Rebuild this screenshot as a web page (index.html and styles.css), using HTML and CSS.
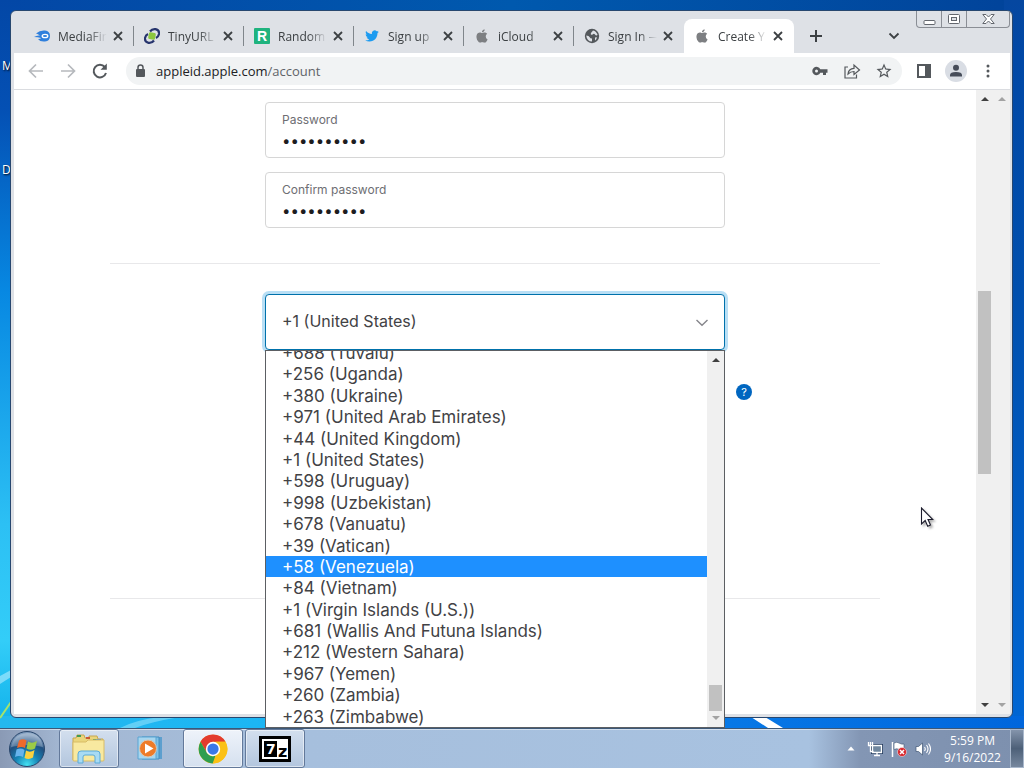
FILE: index.html
```html
<!DOCTYPE html>
<html lang="en">
<head>
    <meta charset="utf-8">
    <title>Create Your Apple ID</title>
    <link rel="stylesheet" href="styles.css">
</head>
<body>
    <svg class="defs" aria-hidden="true">
        <symbol id="apple" viewBox="0 0 24 24">
            <path fill="#7d7f82" d="M12.152 6.896c-.948 0-2.415-1.078-3.96-1.04-2.04.027-3.91 1.183-4.961 3.014-2.117 3.675-.546 9.103 1.519 12.09 1.013 1.454 2.208 3.09 3.792 3.039 1.52-.065 2.09-.987 3.935-.987 1.831 0 2.35.987 3.96.948 1.637-.026 2.676-1.48 3.676-2.948 1.156-1.688 1.636-3.325 1.662-3.415-.039-.013-3.182-1.221-3.22-4.857-.026-3.04 2.48-4.494 2.597-4.559-1.429-2.09-3.623-2.324-4.39-2.376-2-.156-3.675 1.09-4.61 1.09zM15.53 3.83c.843-1.012 1.4-2.427 1.245-3.83-1.207.052-2.662.805-3.532 1.818-.78.896-1.454 2.338-1.273 3.714 1.338.104 2.715-.688 3.559-1.701"/>
        </symbol>
        <symbol id="close" viewBox="0 0 18 18">
            <path d="M5 5l8 8M13 5l-8 8" stroke="#3c4043" stroke-width="1.8" fill="none"/>
        </symbol>
    </svg>

    <main class="desktop">
        <svg class="streaks" viewBox="0 0 1024 728" preserveAspectRatio="none" aria-hidden="true">
            <path d="M0 676L11 670V677L0 684z" fill="#b5ecff" opacity=".6"/>
            <path d="M0 718L11 702" stroke="#a5e36c" stroke-width="2"/>
            <path d="M120 728Q135 720 160 717L180 717Q150 722 135 728z" fill="#8fe0fa" opacity=".6"/>
            <path d="M751 717H765L783 728H768z" fill="#fff"/>
        </svg>
        <span class="desktop-label label-m">M</span>
        <span class="desktop-label label-d">D</span>

        <div class="window">
            <div class="tab-strip">
                <div class="tabs">
                    <div class="tab">
                        <svg class="favicon" viewBox="0 0 16 16"><path d="M0 9Q3 7 6 7.500Q3 5.500 2 5.500Q6 2 11 2.500Q16 3 16 8T11 13.500Q6 14 4 11Q7 11 7 10Q4 9 0 9z" fill="#2f7fdc"/><ellipse cx="11" cy="8" rx="2.800" ry="1.700" fill="#2f7fdc" stroke="#fff" stroke-width="1.300"/></svg>
                        <span class="tab-title">MediaFir</span>
                        <button class="tab-close" aria-label="Close tab"><svg><use href="#close"/></svg></button>
                    </div>
                    <div class="tab">
                        <svg class="favicon" viewBox="0 0 16 16"><rect x="4.500" y="4.500" width="7" height="7" rx="1.500" fill="#8cc63f" transform="rotate(10 8 8)"/><path d="M6 3.500Q8 .8 11.500 1.200Q15.500 2 15 6Q14.500 9 12 10M10 12.500Q8 15.200 4.500 14.800Q.5 14 1 10Q1.500 7 4 6" fill="none" stroke="#26346d" stroke-width="2.200"/></svg>
                        <span class="tab-title">TinyURL</span>
                        <button class="tab-close" aria-label="Close tab"><svg><use href="#close"/></svg></button>
                    </div>
                    <div class="tab">
                        <svg class="favicon" viewBox="0 0 16 16"><rect width="16" height="16" rx="1" fill="#1fb37e"/><text x="8" y="13" class="random-letter">R</text></svg>
                        <span class="tab-title">Random</span>
                        <button class="tab-close" aria-label="Close tab"><svg><use href="#close"/></svg></button>
                    </div>
                    <div class="tab">
                        <svg class="favicon" viewBox="-2 -2 28 28"><path fill="#1d9bf0" d="M23.953 4.57a10 10 0 01-2.825.775 4.958 4.958 0 002.163-2.723c-.951.555-2.005.959-3.127 1.184a4.92 4.92 0 00-8.384 4.482C7.69 8.095 4.067 6.13 1.64 3.162a4.822 4.822 0 00-.666 2.475c0 1.71.87 3.213 2.188 4.096a4.904 4.904 0 01-2.228-.616v.06a4.923 4.923 0 003.946 4.827 4.996 4.996 0 01-2.212.085 4.936 4.936 0 004.604 3.417 9.867 9.867 0 01-6.102 2.105c-.39 0-.779-.023-1.17-.067a13.995 13.995 0 007.557 2.209c9.053 0 13.998-7.496 13.998-13.985 0-.21 0-.42-.015-.63A9.935 9.935 0 0024 4.59z"/></svg>
                        <span class="tab-title">Sign up</span>
                        <button class="tab-close" aria-label="Close tab"><svg><use href="#close"/></svg></button>
                    </div>
                    <div class="tab">
                        <svg class="favicon" viewBox="-2 -2 28 28"><use href="#apple" width="24" height="24"/></svg>
                        <span class="tab-title">iCloud</span>
                        <button class="tab-close" aria-label="Close tab"><svg><use href="#close"/></svg></button>
                    </div>
                    <div class="tab">
                        <svg class="favicon" viewBox="0 0 16 16"><circle cx="8" cy="8" r="7.200" fill="#54585c"/><path d="M2.200 7.500Q5 7.500 5.500 9T8 10.500V13.500Q3 13.500 2.200 7.500zM9 2.400Q12.500 3.200 13.600 7Q12 8 11 6.500T8 7Q6 6.500 7 5T9 2.400zM11 9.500L13 9.300Q12.500 11.500 11 12.500z" fill="#dee1e6"/></svg>
                        <span class="tab-title">Sign In &mdash;</span>
                        <button class="tab-close" aria-label="Close tab"><svg><use href="#close"/></svg></button>
                    </div>
                    <div class="tab tab-active">
                        <svg class="favicon" viewBox="-2 -2 28 28"><use href="#apple" width="24" height="24"/></svg>
                        <span class="tab-title">Create Y</span>
                        <button class="tab-close" aria-label="Close tab"><svg><use href="#close"/></svg></button>
                    </div>
                </div>
                <button class="strip-button new-tab" aria-label="New tab">
                    <svg width="14" height="14" viewBox="0 0 14 14"><path d="M7 1v12M1 7h12" stroke="#3c4043" stroke-width="2"/></svg>
                </button>
                <button class="strip-button tab-search" aria-label="Search tabs">
                    <svg width="12" height="8" viewBox="0 0 12 8"><path d="M1.500 1.500L6 6l4.500-4.500" fill="none" stroke="#3c4043" stroke-width="1.800"/></svg>
                </button>
                <div class="window-controls">
                    <button class="control" aria-label="Minimize">
                        <svg width="13" height="14" viewBox="0 0 13 14"><rect x="1" y="8.500" width="11" height="4" rx="1" fill="#fff" stroke="#63676e"/></svg>
                    </button>
                    <button class="control" aria-label="Maximize">
                        <svg width="13" height="12" viewBox="0 0 13 12"><rect x=".5" y="1.500" width="11" height="9" rx="1" fill="#fff" stroke="#63676e"/><rect x="3.500" y="4.500" width="5" height="3" fill="#dee1e6" stroke="#63676e"/></svg>
                    </button>
                    <button class="control control-close" aria-label="Close">
                        <svg width="13" height="12" viewBox="0 0 13 12"><path d="M.8 1.500H4L6.500 4 9 1.500h3.200L8.500 6l3.700 4.500H9L6.500 8 4 10.500H.8L4.500 6z" fill="#fff" stroke="#63676e"/></svg>
                    </button>
                </div>
            </div>

            <div class="toolbar">
                <button class="tool" aria-label="Back"><svg viewBox="0 0 18 18"><path d="M16 9H3M9 2.500L2.500 9 9 15.500" fill="none" stroke="#b6b9bd" stroke-width="1.700"/></svg></button>
                <button class="tool" aria-label="Forward"><svg viewBox="0 0 18 18"><path d="M2 9h13M9 2.500L15.500 9 9 15.500" fill="none" stroke="#b6b9bd" stroke-width="1.700"/></svg></button>
                <button class="tool" aria-label="Reload"><svg viewBox="0 0 18 18"><path d="M15 11A6.300 6.300 0 1 1 13.800 5" fill="none" stroke="#54585c" stroke-width="2"/><path d="M15.800 1.500v6.300H9.500z" fill="#54585c"/></svg></button>
                <div class="omnibox">
                    <svg class="lock" viewBox="0 0 16 16"><rect x="4" y="6" width="9" height="8" rx="1" fill="#54585c"/><path d="M6 7V4.500a2.500 2.500 0 0 1 5 0V7" fill="none" stroke="#54585c" stroke-width="1.500"/></svg>
                    <span class="url">appleid.apple.com<span class="url-path">/account</span></span>
                    <button class="tool" aria-label="Passwords"><svg viewBox="0 0 18 18"><path fill="#54585c" fill-rule="evenodd" d="M9.300 7.300A4.200 4.200 0 1 0 9.300 10.700H12V13H15V10.700H16.500V7.300zM5.500 7.500a1.500 1.500 0 1 1 0 3 1.500 1.500 0 0 1 0-3z"/></svg></button>
                    <button class="tool" aria-label="Share"><svg viewBox="0 0 18 18"><path d="M5 5H2v11h11.500v-3.500M5 12Q5.500 6.500 11 6.300V3l5.500 5-5.500 4.500V9.500Q7.500 9.500 5 12z" fill="none" stroke="#54585c" stroke-width="1.200"/></svg></button>
                    <button class="tool" aria-label="Bookmark"><svg viewBox="0 0 24 24"><path fill="#54585c" d="M22 9.240l-7.190-.62L12 2 9.190 8.630 2 9.240l5.460 4.730L5.820 21 12 17.270 18.180 21l-1.630-7.030L22 9.240zM12 15.400l-3.760 2.270 1-4.280-3.320-2.880 4.380-.38L12 6.100l1.710 4.040 4.380.38-3.320 2.880 1 4.280L12 15.400z"/></svg></button>
                </div>
                <button class="tool" aria-label="Side panel"><svg viewBox="0 0 18 18"><path d="M2 2h14v14H2zM4 4v10h6V4z" fill="#54585c" fill-rule="evenodd"/></svg></button>
                <button class="tool" aria-label="Profile"><svg class="avatar" viewBox="0 0 22 22"><circle cx="11" cy="11" r="11" fill="#d9dde4"/><circle cx="11" cy="7.700" r="3" fill="#464c59"/><path d="M5 16.500V15q0-3 6-3t6 3v1.500z" fill="#464c59"/></svg></button>
                <button class="tool" aria-label="Menu"><svg viewBox="0 0 18 18"><circle cx="9" cy="4" r="1.500" fill="#54585c"/><circle cx="9" cy="9" r="1.500" fill="#54585c"/><circle cx="9" cy="14" r="1.500" fill="#54585c"/></svg></button>
            </div>

            <div class="page">
                <form class="account-form">
                    <div class="section">
                        <div class="field">
                            <label for="password">Password</label>
                            <input type="password" id="password" value="applepass1">
                        </div>
                        <div class="field">
                            <label for="confirm">Confirm password</label>
                            <input type="password" id="confirm" value="applepass1">
                        </div>
                    </div>
                    <div class="section section-phone">
                        <div class="country">
                            <select class="country-select" aria-label="Country code">
                                <option>+1 (United States)</option>
                            </select>
                            <svg class="country-arrow" width="12" height="8" viewBox="0 0 12 8"><path d="M.5 1L6 6.300 11.500 1" fill="none" stroke="#86868b" stroke-width="1.400"/></svg>
                            <div class="menu">
                                <ul class="menu-list">
                                    <li>+688 (Tuvalu)</li>
                                    <li>+256 (Uganda)</li>
                                    <li>+380 (Ukraine)</li>
                                    <li>+971 (United Arab Emirates)</li>
                                    <li>+44 (United Kingdom)</li>
                                    <li>+1 (United States)</li>
                                    <li>+598 (Uruguay)</li>
                                    <li>+998 (Uzbekistan)</li>
                                    <li>+678 (Vanuatu)</li>
                                    <li>+39 (Vatican)</li>
                                    <li class="highlighted">+58 (Venezuela)</li>
                                    <li>+84 (Vietnam)</li>
                                    <li>+1 (Virgin Islands (U.S.))</li>
                                    <li>+681 (Wallis And Futuna Islands)</li>
                                    <li>+212 (Western Sahara)</li>
                                    <li>+967 (Yemen)</li>
                                    <li>+260 (Zambia)</li>
                                    <li>+263 (Zimbabwe)</li>
                                </ul>
                                <div class="scrollbar">
                                    <span class="arrow-up"></span>
                                    <span class="thumb menu-thumb"></span>
                                    <span class="arrow-down faded"></span>
                                </div>
                            </div>
                        </div>
                        <button type="button" class="help">?</button>
                    </div>
                </form>
                <div class="scrollbar">
                    <span class="arrow-up"></span>
                    <span class="thumb page-thumb"></span>
                    <span class="arrow-down"></span>
                </div>
                <div class="scrollbar">
                    <span class="arrow-up faded"></span>
                    <span class="arrow-down faded"></span>
                </div>
            </div>
        </div>

        <svg class="cursor" width="14" height="22" viewBox="0 0 14 22" aria-hidden="true"><path d="M1.500 1v16l3.700-3.500 2.500 5.700 2.800-1.200-2.500-5.500h4.800z" fill="#fff" stroke="#1c1c2c" stroke-width="1.100"/></svg>
    </main>

    <footer class="taskbar">
        <button class="start" aria-label="Start">
            <svg width="38" height="38" viewBox="0 0 38 38">
                <defs>
                    <radialGradient id="orb" cx="50%" cy="95%" r="85%">
                        <stop offset="0" stop-color="#45e2f2"/>
                        <stop offset=".4" stop-color="#1583b5"/>
                        <stop offset=".75" stop-color="#204f7f"/>
                        <stop offset="1" stop-color="#7f9cbd"/>
                    </radialGradient>
                </defs>
                <circle cx="19" cy="19" r="17.500" fill="url(#orb)" stroke="#29466b"/>
                <path d="M3 17Q6 4 19 3T35 17Q19 13 3 17z" fill="#fff" opacity=".25"/>
                <path d="M11 10.500Q15 8 18.500 10.500L17 18Q13.500 16 9 18z" fill="#ee6a2c"/>
                <path d="M20 11.500Q24 14 29 11L27 18.500Q23 21 18.500 18.500z" fill="#9bcb46"/>
                <path d="M8.500 19.500Q13 17.500 16.500 20L15 27Q11 25 7 27z" fill="#67b3ec"/>
                <path d="M18 20.500Q22 23 26.500 20L25 27.500Q21 30 16.500 28z" fill="#fbd13f"/>
            </svg>
        </button>
        <button class="task task-open" aria-label="Explorer">
            <svg width="36" height="32" viewBox="0 0 36 32">
                <path d="M2 5h3l1-3h7l1 3h4V3h8l1 3h5v21H2z" fill="#ead57b" stroke="#c6a752"/>
                <path d="M6 2h4v2H6zM22 6h4v2h-4z" fill="#3f9b56"/><path d="M15 4h4v2h-4z" fill="#c95a34"/><path d="M25 6h5v2h-5z" fill="#4a8fd4"/>
                <path d="M2 9h13l2-2h16v20q0 1-1 1H3q-1 0-1-1z" fill="#f8e9a0" stroke="#d8bc66"/>
                <path d="M7 30V21q0-3 3-3h16q3 0 3 3v9h-5v-6q0-2-2-2h-8q-2 0-2 2v6z" fill="#a8dbf4" stroke="#5aaad8"/>
            </svg>
        </button>
        <button class="task" aria-label="Media Player">
            <svg width="30" height="28" viewBox="0 0 30 28">
                <path d="M9 2h17v22H9z" fill="#5d9fce"/><path d="M6 2h17v22H6z" fill="#7fc1e6" stroke="#438ec0"/>
                <path d="M2 2h18v22H2z" fill="#a7d6ef" stroke="#5ba4d2"/>
                <circle cx="12" cy="13.500" r="8.500" fill="#ee7b28" stroke="#d7c8b8"/><path d="M9 8.500v10l8.500-5z" fill="#fff"/>
            </svg>
        </button>
        <button class="task task-open task-current" aria-label="Chrome">
            <svg width="30" height="30" viewBox="0 0 48 48">
                <circle cx="24" cy="24" r="23" fill="#fbc116"/>
                <path d="M4.080 12.500A23 23 0 0 1 43.920 12.500H24L14 29.700z" fill="#e33b2e"/>
                <path d="M4.080 12.500L14 29.700Q18 36 24 35.500L28 34.500 23.500 47A23 23 0 0 1 4.080 12.500z" fill="#2f9e4f"/>
                <path d="M43.920 12.500A23 23 0 0 1 23.500 47L34 29.700Q38 20 29 12.500z" fill="#fbc116"/>
                <circle cx="24" cy="24" r="11.500" fill="#fff"/><circle cx="24" cy="24" r="9" fill="#3b78e7"/>
            </svg>
        </button>
        <button class="task task-open" aria-label="7-Zip">
            <svg width="32" height="26" viewBox="0 0 32 26">
                <rect x="1.500" y="1.500" width="29" height="23" fill="#fff" stroke="#000" stroke-width="3"/>
                <rect x="5" y="5" width="13" height="16"/>
                <text x="7" y="18" class="zip-seven">7</text><text x="19" y="21" class="zip-z">z</text>
            </svg>
        </button>

        <div class="tray">
            <button class="tray-icon" aria-label="Show hidden icons"><svg width="8" height="5" viewBox="0 0 8 5"><path d="M4 .5L7.500 4.500h-7z" fill="#fff"/></svg></button>
            <button class="tray-icon" aria-label="Network"><svg width="16" height="16" viewBox="0 0 16 16"><path d="M5.500 4.500h9v7h-9z" fill="#7b93b3" stroke="#223a5c" stroke-width="3"/><path d="M5.500 4.500h9v7h-9zM7 14.500h6M10 12v2" fill="#71889f" stroke="#fff" stroke-width="1.300"/><path d="M1.500 1v3.500h4V1M3.500 1v9.500h3" fill="none" stroke="#fff" stroke-width="1.300"/></svg></button>
            <button class="tray-icon" aria-label="Action Center"><svg width="16" height="16" viewBox="0 0 16 16"><path d="M1.500 1v15" stroke="#fff" stroke-width="1.500"/><path d="M3 2q3-1.500 5 0t5 1v6q-3 1-5-.5T3 8.500z" fill="#fff" stroke="#3d5473" stroke-width=".6"/><circle cx="11" cy="11" r="4.500" fill="#d8262c" stroke="#fff" stroke-width=".5"/><path d="M9 9l4 4M13 9l-4 4" stroke="#fff" stroke-width="1.500"/></svg></button>
            <button class="tray-icon" aria-label="Volume"><svg width="16" height="16" viewBox="0 0 16 16"><path d="M1 5.500h2.500L7.500 2v12L3.500 10.500H1z" fill="#fff" stroke="#3d5473" stroke-width=".7"/><path d="M9.500 6q1.500 2 0 4M11.500 4q3 4 0 8M13.500 2.500q4 5.500 0 11" fill="none" stroke="#fff" stroke-width="1.100"/></svg></button>
            <div class="clock">5:59 PM<br>9/16/2022</div>
            <button class="show-desktop" aria-label="Show desktop"></button>
        </div>
    </footer>
</body>
</html>
```

FILE: styles.css
```css
* {
    box-sizing: border-box;
}
body {
    margin: 0;
    height: 100vh;
    display: flex;
    flex-direction: column;
    overflow: hidden;
    font-family: "Open Sans", "Noto Sans", sans-serif;
    font-size: 12px;
    color: #3c4043;
}
button {
    display: flex;
    align-items: center;
    justify-content: center;
    padding: 0;
    border: none;
    background: none;
    font-family: inherit;
    cursor: pointer;
}
.defs {
    position: absolute;
    width: 0;
    height: 0;
}

/* desktop */
.desktop {
    flex: 1;
    position: relative;
    z-index: 1;
    background:
        linear-gradient(to right, #24b8ee, #1cb6f4 25%, #0a7fea 60%, #0066dc) no-repeat bottom / 100% 12px,
        linear-gradient(#0547a0, #0148a6 8%, #004fae 40%, #0066d4) no-repeat right / 20px 100%,
        linear-gradient(#0347a6, #0450b4 15%, #0788e2 40%, #2cc0f4 72%, #33cdf8 88%, #10b0ea) no-repeat left / 20px 100%,
        linear-gradient(to right, #0347a6, #0059ae 50%, #01439a);
}
.streaks {
    position: absolute;
    width: 100%;
    height: 100%;
}
.desktop-label {
    position: absolute;
    left: 2px;
    color: #fff;
    line-height: 16px;
    text-shadow: 1px 1px 2px #000;
}
.label-m {
    top: 58px;
}
.label-d {
    top: 162px;
}
.cursor {
    position: absolute;
    left: 920px;
    top: 507px;
    filter: drop-shadow(2px 2px 1px rgba(0, 0, 0, 0.3));
}

/* browser window */
.window {
    position: absolute;
    top: 10px;
    right: 11px;
    bottom: 10px;
    left: 10px;
    display: flex;
    flex-direction: column;
    padding: 0 2px 3px 3px;
    border: 1px solid #27476f;
    border-radius: 6px;
    background: #dee1e6;
}
.tab-strip {
    display: flex;
    align-items: flex-end;
    height: 42px;
}
.tabs {
    display: flex;
    margin-left: 10px;
}
.tab {
    display: flex;
    align-items: center;
    width: 110px;
    height: 34px;
    padding-left: 10px;
    background: linear-gradient(#80868b, #80868b) no-repeat right center / 1px 20px;
}
.tab:nth-last-child(2) {
    background: none;
}
.tab-active {
    background: #fff;
    border-radius: 8px 8px 0 0;
}
.favicon {
    width: 16px;
    height: 16px;
}
.tab-title {
    width: 51px;
    margin-left: 8px;
    white-space: nowrap;
    mask-image: linear-gradient(to right, #000 60%, transparent 96%);
}
.tab-close,
.tab-close svg {
    width: 18px;
    height: 18px;
}
.random-letter {
    font: bold 14px "Liberation Sans", Arial, sans-serif;
    fill: #fff;
    text-anchor: middle;
}
.strip-button {
    width: 28px;
    height: 34px;
}
.new-tab {
    margin-left: 8px;
}
.tab-search {
    margin-left: auto;
}
.window-controls {
    display: flex;
    align-self: flex-start;
    margin-left: 8px;
    border: 1px solid #8a8e95;
    border-top: none;
    border-radius: 0 0 4px 4px;
}
.control {
    width: 25px;
    height: 16px;
    border-right: 1px solid #8a8e95;
}
.control-close {
    width: 42px;
    border-right: none;
}
.toolbar {
    display: flex;
    align-items: center;
    height: 37px;
    padding: 0 6px;
    background: #fff;
    border-bottom: 1px solid #dadce0;
}
.tool {
    width: 32px;
    height: 28px;
}
.tool svg {
    width: 18px;
    height: 18px;
}
.tool .avatar {
    width: 22px;
    height: 22px;
}
.omnibox {
    flex: 1;
    display: flex;
    align-items: center;
    height: 28px;
    margin: 0 6px 0 10px;
    padding: 0 2px 0 6px;
    border-radius: 14px;
    background: #f1f3f4;
}
.lock {
    width: 16px;
    height: 16px;
}
.url {
    flex: 1;
    margin-left: 8px;
    font-size: 13px;
    color: #202124;
}
.url-path {
    color: #5f6368;
}

/* page */
.page {
    flex: 1;
    display: flex;
    background: #fff;
}
.account-form {
    flex: 1;
    padding-top: 12px;
    font-family: Inter, "Liberation Sans", sans-serif;
}
.section {
    width: 80%;
    margin: 0 auto;
    padding-bottom: 35px;
    border-bottom: 1px solid #e8e8ea;
}
.field {
    width: 460px;
    margin: 0 auto 14px;
    padding: 9px 16px 5px;
    border: 1px solid #d6d6d6;
    border-radius: 4px;
}
.field:last-child {
    margin-bottom: 0;
}
.field label {
    display: block;
    line-height: 16px;
    color: #6e6e73;
}
.field input {
    display: block;
    width: 100%;
    height: 24px;
    padding: 0;
    border: none;
    outline: none;
    background: none;
    font-family: Inter, sans-serif;
    font-size: 15px;
    color: #1d1d1f;
}
.section-phone {
    display: grid;
    grid-template-columns: 1fr 460px 1fr;
    row-gap: 34px;
    padding: 30px 0 198px;
}
.country {
    position: relative;
    grid-column: 2;
}
.country-select {
    display: block;
    width: 100%;
    height: 56px;
    padding: 0 16px 2px;
    appearance: none;
    border: 1px solid #0071ab;
    border-radius: 4px;
    outline: none;
    box-shadow: 0 0 0 3px #b9dff5;
    background: #fff;
    font-family: Inter, "Liberation Sans", sans-serif;
    font-size: 16px;
    color: #424245;
}
.country-arrow {
    position: absolute;
    top: 25px;
    right: 17px;
}
.menu {
    position: absolute;
    z-index: 2;
    top: 56px;
    left: 0;
    display: flex;
    align-items: flex-end;
    width: 100%;
    height: 378px;
    overflow: hidden;
    border: 1px solid #5c5f63;
    background: #fff;
}
.menu-list {
    flex: 1;
    display: grid;
    grid-auto-rows: 1fr;
    height: 385px;
    margin: 0;
    padding: 0;
    list-style: none;
    font-size: 17px;
    line-height: 22px;
    color: #424245;
}
.menu-list li {
    min-height: 0;
    padding-left: 16px;
}
.menu-list .highlighted {
    background: #1e90ff;
    color: #fff;
}
.help {
    grid-column: 3;
    grid-row: 2;
    width: 16px;
    height: 16px;
    margin-left: 11px;
    border-radius: 50%;
    background: #0066c0;
    color: #fff;
    font-size: 11px;
}

/* scrollbars */
.scrollbar {
    display: flex;
    flex-direction: column;
    align-items: center;
    justify-content: space-between;
    align-self: stretch;
    width: 17px;
    padding: 7px 0;
    background: #f0f0f0;
}
.arrow-up,
.arrow-down {
    border: 4px solid transparent;
}
.arrow-up {
    border-top: none;
    border-bottom-color: #404040;
}
.arrow-down {
    border-bottom: none;
    border-top-color: #404040;
}
.arrow-up.faded {
    border-bottom-color: #a3a3a3;
}
.arrow-down.faded {
    border-top-color: #a3a3a3;
}
.thumb {
    width: 13px;
    background: #c1c1c1;
}
.page-thumb {
    height: 30%;
    margin-bottom: 40px;
}
.menu-thumb {
    height: 26px;
    margin: auto 0 5px;
}

/* taskbar */
.taskbar {
    display: flex;
    height: 40px;
    border-top: 1px solid #3c5878;
    background: linear-gradient(to right, #8a9ab5, #a3b7d2 6%, #a6bfdd 30%, #a8c2e0 79%, #8396b4 84%, #7d90ae);
    box-shadow: inset 0 1px 0 rgba(255, 255, 255, 0.5);
}
.start {
    width: 54px;
    margin-right: 5px;
}
.task {
    width: 60px;
    height: 39px;
    margin-right: 2px;
    border: 1px solid transparent;
    border-radius: 3px;
}
.task-open {
    border-color: #63799a;
    background: linear-gradient(#d3dfee, #b3c6de);
    box-shadow: inset 0 0 0 1px rgba(255, 255, 255, 0.5);
}
.task-current {
    background: linear-gradient(#eef3fa, #d5e0ef);
}
.zip-seven,
.zip-z {
    font: bold 16px "DejaVu Sans", sans-serif;
}
.zip-seven {
    font-size: 14px;
    fill: #fff;
}
.tray {
    display: flex;
    align-items: center;
    margin-left: auto;
}
.tray-icon {
    width: 24px;
    height: 24px;
}
.clock {
    width: 75px;
    text-align: center;
    line-height: 17px;
    color: #fff;
}
.show-desktop {
    align-self: stretch;
    width: 14px;
    border: 1px solid #a9b8cc;
    background: linear-gradient(#8494ab, #4d6078 50%, #76879e);
}
```
